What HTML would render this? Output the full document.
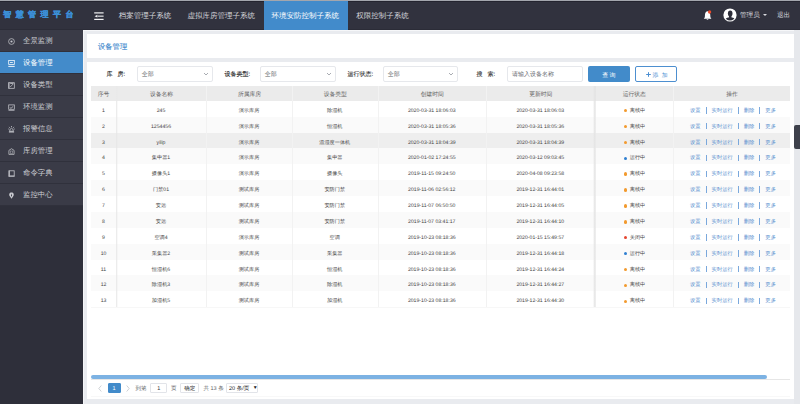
<!DOCTYPE html>
<html><head><meta charset="utf-8">
<style>
*{margin:0;padding:0;box-sizing:border-box}
html,body{width:800px;height:404px;overflow:hidden}
body{position:relative;text-rendering:geometricPrecision;background:#e9ebef;font-family:"Liberation Sans",sans-serif;color:#606266}
.a{position:absolute;white-space:nowrap}
#strip{left:0;top:0;width:800px;height:1px;background:#a3a6ad}
#hdr{left:0;top:1px;width:800px;height:29px;background:#31323e;border-top:1px solid #24242f}
#logo{left:3.2px;top:9.2px;font-size:8px;line-height:12px;font-weight:bold;color:#3b8ed6;-webkit-text-stroke:0.35px #3b8ed6;letter-spacing:4.45px}
.tab{top:1px;height:29px;line-height:29.2px;font-size:7.5px;color:#d4d5da;padding:0 8px}
.tab.on{background:#428bcb;color:#fff}
#side{left:0;top:30px;width:83px;height:374px;background:#2e2f3a}
.si{left:0;width:83px;height:22px;background:#3a3b47;border-bottom:1px solid #30313c;font-size:7.4px;line-height:21px;color:#cfd0d5}
.si.on{background:#438bca;color:#fff}
.si span{position:absolute;left:23px;top:0}
.si svg{position:absolute;left:7.8px;top:8.2px}
#sline{left:83px;top:30px;width:1px;height:374px;background:#f4f5f7}
.panel{background:#fff}
#title{left:98px;top:41px;font-size:7.3px;line-height:11px;color:#3a86cc;-webkit-text-stroke:0.1px #3a86cc}
.lbl{font-size:6px;line-height:9px;color:#2b2b2b;top:70.8px;-webkit-text-stroke:0.1px #2b2b2b}
.sel{top:66px;height:15.5px;border:1px solid #e6e8ec;border-radius:2px;background:#fff}
.sel span{position:absolute;left:3.8px;top:3.8px;font-size:6px;line-height:9px;color:#5c5f66}
.sel i{position:absolute;right:4.2px;top:6.2px;width:4px;height:2.2px;background:linear-gradient(to top right,transparent 42%,#a9acb2 45%,#a9acb2 62%,transparent 65%) left/50% 100% no-repeat,linear-gradient(to top left,transparent 42%,#a9acb2 45%,#a9acb2 62%,transparent 65%) right/50% 100% no-repeat}
.btn{top:66px;height:15.5px;border-radius:2px;font-size:6px;line-height:14px;text-align:center}
#tbl{left:91px;top:86px;width:699px}
.th{position:absolute;top:0;height:14.75px;background:#ebebeb;font-size:5.8px;line-height:18.35px;color:#606060;text-align:center}
.row{position:absolute;left:0;width:699px;height:15.88px}
.row.s{background:#fafafa}
.row.h{background:#eeeeee}
.c{position:absolute;top:0;height:15.88px;line-height:21px;font-size:5.15px;color:#444;text-align:center;white-space:nowrap}
.vl{position:absolute;top:0;width:1px;background:#eeeeee}
.dot{display:inline-block;width:3.4px;height:3.4px;border-radius:50%;margin-right:2.6px;vertical-align:middle;position:relative;top:0.3px}
.ops{color:#5890cf;font-size:5.3px;text-indent:3px}
.st{font-size:5.2px;text-indent:1.5px}
.ops b{display:inline-block;width:0.8px;height:6.5px;background:#7aa8dc;margin:0 5.1px;vertical-align:middle;font-weight:normal;position:relative;top:0px}
.pg{top:383.8px;font-size:5.5px;line-height:10px;color:#606266}
.pbox{top:382.5px;height:10.5px;border:1px solid #e2e4e9;border-radius:1px;background:#fff;font-size:5.5px;line-height:10.3px;text-align:center;color:#333}
</style></head><body>
<div class="a" id="strip"></div>
<div class="a" id="hdr"></div>
<div class="a" style="left:0;top:29px;width:800px;height:1px;background:#2b2c37"></div>
<div class="a" id="logo">智慧管理平台</div>
<svg class="a" style="left:93.5px;top:11px" width="10" height="10" viewBox="0 0 10 10">
<rect x="0.2" y="1.3" width="9.4" height="1.2" fill="#f2f2f4"/>
<rect x="3.6" y="4.6" width="6" height="1.1" fill="#f2f2f4"/>
<path d="M0.6 5.15 L3.4 3.7 L3.4 6.6 Z" fill="#f2f2f4"/>
<rect x="0.2" y="7.8" width="9.4" height="1.2" fill="#f2f2f4"/>
</svg>
<div class="a tab" style="left:110.8px">档案管理子系统</div>
<div class="a tab" style="left:179.5px">虚拟库房管理子系统</div>
<div class="a tab on" style="left:263.5px;width:84.3px">环境安防控制子系统</div>
<div class="a tab" style="left:348.2px">权限控制子系统</div>
<!-- bell -->
<svg class="a" style="left:703px;top:10px" width="10" height="11" viewBox="0 0 10 11">
<path d="M4.6 1.3 C3 1.3 2.2 2.6 2 4.6 L1.8 7.2 L0.8 8.7 L8.4 8.7 L7.4 7.2 L7.2 4.6 C7 2.6 6.2 1.3 4.6 1.3Z" fill="#fff"/>
<path d="M3.4 9.3 Q4.5 10.6 5.6 9.3Z" fill="#fff"/>
<circle cx="6.6" cy="2" r="1.65" fill="#ee4c2c"/>
</svg>
<!-- avatar -->
<svg class="a" style="left:723px;top:8.25px" width="14" height="14" viewBox="0 0 14 14">
<defs><clipPath id="cp"><circle cx="7" cy="7" r="5.5"/></clipPath></defs>
<circle cx="7" cy="7" r="6.6" fill="#fff"/>
<g clip-path="url(#cp)" fill="#2d2e3a">
<ellipse cx="7.2" cy="5.6" rx="2.3" ry="3"/>
<path d="M6 8 L8.4 8 L8.6 9.6 Q12.6 10 13.2 14 L1.2 14 Q1.8 10 5.8 9.6Z"/>
</g>
</svg>
<div class="a" style="left:740px;top:10.5px;font-size:6.6px;line-height:10px;color:#d8d9de">管理员</div>
<div class="a" style="left:762.5px;top:14px;width:0;height:0;border-left:2.5px solid transparent;border-right:2.5px solid transparent;border-top:2.5px solid #d8d9de"></div>
<div class="a" style="left:777px;top:10.5px;font-size:6.6px;line-height:10px;color:#d8d9de">退出</div>

<!-- sidebar -->
<div class="a" id="side"></div>
<div class="a" id="sline"></div>
<div class="a" style="left:83px;top:30px;width:717px;height:1px;background:#f6f7f9"></div>
<div class="a si" style="top:30px"><svg width="7" height="7" viewBox="0 0 7 7"><circle cx="3.5" cy="3.5" r="2.9" fill="none" stroke="#c4c5cb" stroke-width="0.75"/><circle cx="3.5" cy="3.5" r="1.1" fill="#c4c5cb"/></svg><span>全景监测</span></div>
<div class="a si on" style="top:52px"><svg width="7" height="7" viewBox="0 0 7 7"><rect x="0.7" y="0.6" width="5.6" height="3.9" fill="none" stroke="#fff" stroke-width="0.75"/><rect x="2" y="2.1" width="2.8" height="0.8" fill="#fff"/><rect x="0.3" y="5.9" width="6.4" height="0.9" fill="#fff"/></svg><span>设备管理</span></div>
<div class="a si" style="top:74px"><svg width="7" height="7" viewBox="0 0 7 7"><rect x="0.7" y="0.7" width="5.6" height="5.6" fill="none" stroke="#c4c5cb" stroke-width="0.75"/><rect x="0.4" y="0.4" width="1.1" height="6.2" fill="#b5b6bd"/><path d="M2.2 5 L5.2 2" stroke="#c4c5cb" stroke-width="0.75"/><path d="M2.2 1.5 L5.5 1.5" stroke="#c4c5cb" stroke-width="0.8"/></svg><span>设备类型</span></div>
<div class="a si" style="top:96px"><svg width="7" height="7" viewBox="0 0 7 7"><rect x="0.7" y="0.9" width="5.6" height="4.4" fill="none" stroke="#c4c5cb" stroke-width="0.75"/><path d="M1.8 3.6 L3 4.3 L5.2 2.4" fill="none" stroke="#c4c5cb" stroke-width="0.8"/><rect x="0.5" y="6.2" width="6" height="0.7" fill="#b8b9c0"/></svg><span>环境监测</span></div>
<div class="a si" style="top:118px"><svg width="7" height="7" viewBox="0 0 7 7"><path d="M3.5 0 L3.5 1.2 M1 0.9 L1.8 1.8 M6 0.9 L5.2 1.8 M0.3 3 L1.2 3 M6.7 3 L5.8 3" stroke="#c4c5cb" stroke-width="0.8"/><path d="M1.6 5.2 Q1.8 2.3 3.5 2.3 Q5.2 2.3 5.4 5.2Z" fill="none" stroke="#c4c5cb" stroke-width="0.75"/><rect x="0.9" y="5.3" width="5.2" height="1.2" fill="#c4c5cb"/></svg><span>报警信息</span></div>
<div class="a si" style="top:140px"><svg width="7" height="7" viewBox="0 0 7 7"><path d="M0.9 6.4 L0.9 2.4 L3.5 0.7 L6.1 2.4 L6.1 6.4Z" fill="none" stroke="#c4c5cb" stroke-width="0.75"/><rect x="2.3" y="3" width="2.4" height="2.3" fill="none" stroke="#9a9ba3" stroke-width="0.6"/></svg><span>库房管理</span></div>
<div class="a si" style="top:162px"><svg width="7" height="7" viewBox="0 0 7 7"><rect x="1" y="0.8" width="5.2" height="5.4" fill="none" stroke="#c4c5cb" stroke-width="0.8"/><rect x="0.7" y="0.6" width="1.2" height="6" fill="#b5b6bd"/><rect x="0.7" y="5.5" width="5.8" height="1.1" fill="#b5b6bd"/></svg><span>命令字典</span></div>
<div class="a si" style="top:184px"><svg width="7" height="7" viewBox="0 0 7 7"><path d="M3.5 0.4 C5.7 0.4 6.4 2.6 5.2 4.3 L3.5 6.8 L1.8 4.3 C0.6 2.6 1.3 0.4 3.5 0.4Z" fill="#c9cad0"/><path d="M3.5 1.6 L4 3.3 L3.5 5 L3 3.3Z" fill="#3a3b47"/></svg><span>监控中心</span></div>

<!-- panels -->
<div class="a panel" style="left:87px;top:34px;width:707px;height:23.5px"></div>
<div class="a" id="title">设备管理</div>
<div class="a panel" style="left:87px;top:62px;width:707px;height:336.5px"></div>

<!-- filters -->
<div class="a lbl" style="left:106.5px">库&nbsp;&nbsp;&nbsp;房:</div>
<div class="a sel" style="left:137px;width:76px"><span>全部</span><i></i></div>
<div class="a lbl" style="left:224.5px">设备类型:</div>
<div class="a sel" style="left:260px;width:76px"><span>全部</span><i></i></div>
<div class="a lbl" style="left:347.5px">运行状态:</div>
<div class="a sel" style="left:383px;width:75px"><span>全部</span><i></i></div>
<div class="a lbl" style="left:476.4px">搜&nbsp;&nbsp;&nbsp;索:</div>
<div class="a sel" style="left:506.5px;width:76px"><span style="color:#6a6d73;left:4.5px">请输入设备名称</span></div>
<div class="a btn" style="left:588px;width:42px;background:#428bca"></div><div class="a" style="left:602.2px;top:71.5px;font-size:6px;line-height:9px;color:#fff;letter-spacing:1.4px">查询</div>
<div class="a btn" style="left:635px;width:42px;border:0.9px solid #4d8fd0;background:#fff"></div><svg class="a" style="left:645.6px;top:71.9px" width="5" height="5" viewBox="0 0 5 5"><path d="M2.5 0.2 V4.8 M0.2 2.5 H4.8" stroke="#4a8ed2" stroke-width="1"/></svg><div class="a" style="left:652.6px;top:71.6px;font-size:5.8px;line-height:9px;color:#4a8ed2;letter-spacing:3.3px">添加</div>

<!-- table -->
<div class="a" id="tbl">
<div class="th" style="left:0;width:25px">序号</div>
<div class="th" style="left:25px;width:90px;border-left:1px solid #f4f4f4">设备名称</div>
<div class="th" style="left:115px;width:86px;border-left:1px solid #f4f4f4">所属库房</div>
<div class="th" style="left:201px;width:85.5px;border-left:1px solid #f4f4f4">设备类型</div>
<div class="th" style="left:286.5px;width:108.5px;border-left:1px solid #f4f4f4">创建时间</div>
<div class="th" style="left:395px;width:108.5px;border-left:1px solid #f4f4f4">更新时间</div>
<div class="th" style="left:503.5px;width:78.5px;border-left:1px solid #dcdcdc">运行状态</div>
<div class="th" style="left:582px;width:117px;border-left:1px solid #f4f4f4">操作</div>
<div id="rows" style="position:absolute;left:0;top:14.75px;width:699px">
<div class="row" style="top:0.00px"><div class="c" style="left:0px;width:25px">1</div><div class="c" style="left:25px;width:90px">245</div><div class="c" style="left:115px;width:86px">演示库房</div><div class="c" style="left:201px;width:85.5px">除湿机</div><div class="c" style="left:286.5px;width:108.5px">2020-03-31 18:06:03</div><div class="c" style="left:395px;width:108.5px">2020-03-31 18:06:03</div><div class="c st" style="left:503.5px;width:78.5px"><i class="dot" style="background:#f29a2e"></i>离线中</div><div class="c ops" style="left:582px;width:117px">设置<b></b>实时运行<b></b>删除<b></b>更多</div></div>
<div class="row s" style="top:15.88px"><div class="c" style="left:0px;width:25px">2</div><div class="c" style="left:25px;width:90px">1254456</div><div class="c" style="left:115px;width:86px">演示库房</div><div class="c" style="left:201px;width:85.5px">恒湿机</div><div class="c" style="left:286.5px;width:108.5px">2020-03-31 18:05:36</div><div class="c" style="left:395px;width:108.5px">2020-03-31 18:05:36</div><div class="c st" style="left:503.5px;width:78.5px"><i class="dot" style="background:#f29a2e"></i>离线中</div><div class="c ops" style="left:582px;width:117px">设置<b></b>实时运行<b></b>删除<b></b>更多</div></div>
<div class="row h" style="top:31.76px"><div class="c" style="left:0px;width:25px">3</div><div class="c" style="left:25px;width:90px">yilip</div><div class="c" style="left:115px;width:86px">演示库房</div><div class="c" style="left:201px;width:85.5px">温湿度一体机</div><div class="c" style="left:286.5px;width:108.5px">2020-03-31 18:04:39</div><div class="c" style="left:395px;width:108.5px">2020-03-31 18:04:39</div><div class="c st" style="left:503.5px;width:78.5px"><i class="dot" style="background:#f29a2e"></i>离线中</div><div class="c ops" style="left:582px;width:117px">设置<b></b>实时运行<b></b>删除<b></b>更多</div></div>
<div class="row s" style="top:47.64px"><div class="c" style="left:0px;width:25px">4</div><div class="c" style="left:25px;width:90px">集中器1</div><div class="c" style="left:115px;width:86px">演示库房</div><div class="c" style="left:201px;width:85.5px">集中器</div><div class="c" style="left:286.5px;width:108.5px">2020-01-02 17:24:55</div><div class="c" style="left:395px;width:108.5px">2020-03-12 09:03:45</div><div class="c st" style="left:503.5px;width:78.5px"><i class="dot" style="background:#2f7fd0"></i>运行中</div><div class="c ops" style="left:582px;width:117px">设置<b></b>实时运行<b></b>删除<b></b>更多</div></div>
<div class="row" style="top:63.52px"><div class="c" style="left:0px;width:25px">5</div><div class="c" style="left:25px;width:90px">摄像头1</div><div class="c" style="left:115px;width:86px">演示库房</div><div class="c" style="left:201px;width:85.5px">摄像头</div><div class="c" style="left:286.5px;width:108.5px">2019-11-15 09:24:50</div><div class="c" style="left:395px;width:108.5px">2020-04-08 09:23:58</div><div class="c st" style="left:503.5px;width:78.5px"><i class="dot" style="background:#f29a2e"></i>离线中</div><div class="c ops" style="left:582px;width:117px">设置<b></b>实时运行<b></b>删除<b></b>更多</div></div>
<div class="row s" style="top:79.40px"><div class="c" style="left:0px;width:25px">6</div><div class="c" style="left:25px;width:90px">门禁01</div><div class="c" style="left:115px;width:86px">测试库房</div><div class="c" style="left:201px;width:85.5px">安防门禁</div><div class="c" style="left:286.5px;width:108.5px">2019-11-06 02:56:12</div><div class="c" style="left:395px;width:108.5px">2019-12-31 16:44:01</div><div class="c st" style="left:503.5px;width:78.5px"><i class="dot" style="background:#f29a2e"></i>离线中</div><div class="c ops" style="left:582px;width:117px">设置<b></b>实时运行<b></b>删除<b></b>更多</div></div>
<div class="row" style="top:95.28px"><div class="c" style="left:0px;width:25px">7</div><div class="c" style="left:25px;width:90px">安远</div><div class="c" style="left:115px;width:86px">测试库房</div><div class="c" style="left:201px;width:85.5px">安防门禁</div><div class="c" style="left:286.5px;width:108.5px">2019-11-07 06:50:50</div><div class="c" style="left:395px;width:108.5px">2019-12-31 16:44:05</div><div class="c st" style="left:503.5px;width:78.5px"><i class="dot" style="background:#f29a2e"></i>离线中</div><div class="c ops" style="left:582px;width:117px">设置<b></b>实时运行<b></b>删除<b></b>更多</div></div>
<div class="row s" style="top:111.16px"><div class="c" style="left:0px;width:25px">8</div><div class="c" style="left:25px;width:90px">安远</div><div class="c" style="left:115px;width:86px">测试库房</div><div class="c" style="left:201px;width:85.5px">安防门禁</div><div class="c" style="left:286.5px;width:108.5px">2019-11-07 03:41:17</div><div class="c" style="left:395px;width:108.5px">2019-12-31 16:44:10</div><div class="c st" style="left:503.5px;width:78.5px"><i class="dot" style="background:#f29a2e"></i>离线中</div><div class="c ops" style="left:582px;width:117px">设置<b></b>实时运行<b></b>删除<b></b>更多</div></div>
<div class="row" style="top:127.04px"><div class="c" style="left:0px;width:25px">9</div><div class="c" style="left:25px;width:90px">空调4</div><div class="c" style="left:115px;width:86px">演示库房</div><div class="c" style="left:201px;width:85.5px">空调</div><div class="c" style="left:286.5px;width:108.5px">2019-10-23 08:18:36</div><div class="c" style="left:395px;width:108.5px">2020-01-15 15:49:57</div><div class="c st" style="left:503.5px;width:78.5px"><i class="dot" style="background:#e5452f"></i>关闭中</div><div class="c ops" style="left:582px;width:117px">设置<b></b>实时运行<b></b>删除<b></b>更多</div></div>
<div class="row s" style="top:142.92px"><div class="c" style="left:0px;width:25px">10</div><div class="c" style="left:25px;width:90px">采集器2</div><div class="c" style="left:115px;width:86px">测试库房</div><div class="c" style="left:201px;width:85.5px">采集器</div><div class="c" style="left:286.5px;width:108.5px">2019-10-23 08:18:36</div><div class="c" style="left:395px;width:108.5px">2019-12-31 16:44:18</div><div class="c st" style="left:503.5px;width:78.5px"><i class="dot" style="background:#2f7fd0"></i>运行中</div><div class="c ops" style="left:582px;width:117px">设置<b></b>实时运行<b></b>删除<b></b>更多</div></div>
<div class="row" style="top:158.80px"><div class="c" style="left:0px;width:25px">11</div><div class="c" style="left:25px;width:90px">恒湿机6</div><div class="c" style="left:115px;width:86px">测试库房</div><div class="c" style="left:201px;width:85.5px">恒湿机</div><div class="c" style="left:286.5px;width:108.5px">2019-10-23 08:18:36</div><div class="c" style="left:395px;width:108.5px">2019-12-31 16:44:24</div><div class="c st" style="left:503.5px;width:78.5px"><i class="dot" style="background:#f29a2e"></i>离线中</div><div class="c ops" style="left:582px;width:117px">设置<b></b>实时运行<b></b>删除<b></b>更多</div></div>
<div class="row s" style="top:174.68px"><div class="c" style="left:0px;width:25px">12</div><div class="c" style="left:25px;width:90px">除湿机3</div><div class="c" style="left:115px;width:86px">测试库房</div><div class="c" style="left:201px;width:85.5px">除湿机</div><div class="c" style="left:286.5px;width:108.5px">2019-10-23 08:18:36</div><div class="c" style="left:395px;width:108.5px">2019-12-31 16:44:27</div><div class="c st" style="left:503.5px;width:78.5px"><i class="dot" style="background:#f29a2e"></i>离线中</div><div class="c ops" style="left:582px;width:117px">设置<b></b>实时运行<b></b>删除<b></b>更多</div></div>
<div class="row" style="top:190.56px"><div class="c" style="left:0px;width:25px">13</div><div class="c" style="left:25px;width:90px">加湿机5</div><div class="c" style="left:115px;width:86px">测试库房</div><div class="c" style="left:201px;width:85.5px">加湿机</div><div class="c" style="left:286.5px;width:108.5px">2019-10-23 08:18:36</div><div class="c" style="left:395px;width:108.5px">2019-12-31 16:44:30</div><div class="c st" style="left:503.5px;width:78.5px"><i class="dot" style="background:#f29a2e"></i>离线中</div><div class="c ops" style="left:582px;width:117px">设置<b></b>实时运行<b></b>删除<b></b>更多</div></div>
</div>
</div>

<div class="a" style="left:206px;top:86px;width:1px;height:221px;background:#f2f2f2"></div>
<div class="a" style="left:292px;top:86px;width:1px;height:221px;background:#f2f2f2"></div>
<div class="a" style="left:377.5px;top:86px;width:1px;height:221px;background:#f2f2f2"></div>
<div class="a" style="left:486px;top:86px;width:1px;height:221px;background:#f2f2f2"></div>
<div class="a" style="left:673px;top:86px;width:1px;height:221px;background:#f2f2f2"></div>
<div class="a" style="left:116px;top:86px;width:2px;height:221px;background:linear-gradient(90deg,#e6e6e6,rgba(240,240,240,0))"></div>
<div class="a" style="left:592.5px;top:86px;width:3.5px;height:221px;background:linear-gradient(90deg,rgba(235,235,235,0),#e4e4e4 60%,rgba(235,235,235,0.6))"></div>
<div class="a" style="left:91px;top:307px;width:699px;height:1px;background:#f7f7f7"></div>

<!-- horizontal scrollbar -->
<div class="a" style="left:91px;top:378.5px;width:699px;height:1px;background:#e6e6e6"></div>
<div class="a" style="left:91px;top:375.3px;width:676px;height:3.8px;border-radius:2px;background:#7cb2e3"></div>
<div class="a" style="left:91px;top:396.3px;width:699px;height:1px;background:#f8f8f8"></div>

<!-- pagination -->
<svg class="a" style="left:97.5px;top:384.5px" width="4" height="7" viewBox="0 0 4 7"><path d="M3.3 0.5 L0.8 3.5 L3.3 6.5" fill="none" stroke="#c3c6cc" stroke-width="0.8"/></svg>
<div class="a pbox" style="left:107.5px;width:13px;background:#428bca;border-color:#428bca;color:#fff">1</div>
<svg class="a" style="left:126px;top:384.5px" width="4" height="7" viewBox="0 0 4 7"><path d="M0.7 0.5 L3.2 3.5 L0.7 6.5" fill="none" stroke="#c3c6cc" stroke-width="0.8"/></svg>
<div class="a pg" style="left:135.5px">到第</div>
<div class="a pbox" style="left:150.2px;width:17px">1</div>
<div class="a pg" style="left:171px">页</div>
<div class="a pbox" style="left:180.2px;width:19.3px">确定</div>
<div class="a pg" style="left:203.5px">共 13 条</div>
<div class="a pbox" style="left:226px;width:32px;text-align:left;padding-left:2px;color:#222">20 条/页 <span style="font-size:5px;position:relative;left:2px;top:-0.3px">▼</span></div>

<!-- right scroll thumb -->
<div class="a" style="left:794px;top:30px;width:6px;height:374px;background:#e6e8ec"></div>
<div class="a" style="left:794px;top:125px;width:6px;height:24px;background:#3e414c;border-radius:2px 0 0 2px"></div>

</body></html>
